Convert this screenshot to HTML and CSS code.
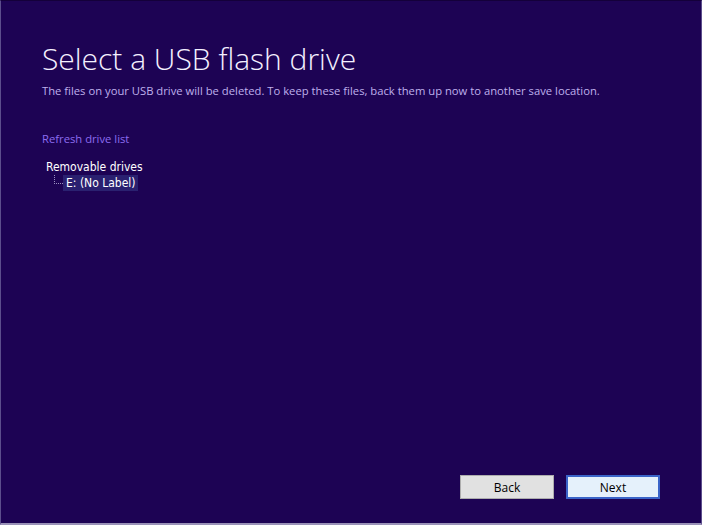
FILE: index.html
```html
<!DOCTYPE html>
<html lang="en">
<head>
    <meta charset="UTF-8">
    <title>Select a USB flash drive</title>
    <link rel="stylesheet" href="styles.css">
</head>
<body>
    <div class="wizard">
        <h1 class="wizard-title">Select a USB flash drive</h1>
        <p class="wizard-subtitle">The files on your USB drive will be deleted. To keep these files, back them up now to another save location.</p>

        <a class="refresh-link" href="#">Refresh drive list</a>

        <div class="drive-tree">
            <div class="tree-root">Removable drives</div>
            <div class="tree-item">
                <span class="tree-line"></span>
                <span class="tree-label">E: (No Label)</span>
            </div>
        </div>

        <div class="wizard-buttons">
            <button class="btn">Back</button>
            <button class="btn btn-default">Next</button>
        </div>
    </div>
</body>
</html>
```

FILE: styles.css
```css
html, body {
    margin: 0;
    padding: 0;
}

body {
    background-color: #1d0354;
}

.wizard {
    box-sizing: border-box;
    width: 702px;
    height: 525px;
    border: 1px solid #5c4e8c;
    border-top-color: #14003a;
    border-bottom-width: 2px;
    border-bottom-color: #9a92b8;
    padding: 38px 41px 24px 41px;
    display: flex;
    flex-direction: column;
    align-items: flex-start;
    font-family: 'Open Sans', sans-serif;
}

.wizard-title {
    margin: 0;
    font-size: 30px;
    font-weight: 300;
    line-height: 40px;
    color: #f4f0ff;
}

.wizard-subtitle {
    margin: 4px 0 0 0;
    font-size: 11.25px;
    line-height: 16px;
    color: #bfb0ec;
}

.refresh-link {
    margin-top: 32px;
    font-size: 11.25px;
    line-height: 16px;
    color: #8c6cf0;
    text-decoration: none;
}

.drive-tree {
    margin-top: 12px;
    margin-left: 4px;
    font-family: 'DejaVu Sans Condensed', 'DejaVu Sans', sans-serif;
    font-size: 12px;
    color: #ffffff;
}

.tree-root {
    line-height: 16px;
}

.tree-item {
    display: flex;
    align-items: center;
}

.tree-line {
    width: 8px;
    height: 8px;
    margin-left: 8px;
    margin-top: -8px;
    border-left: 1px dotted #9a90c0;
    border-bottom: 1px dotted #9a90c0;
}

.tree-label {
    padding: 0 2px 0 3px;
    line-height: 16px;
    background-color: #2a2170;
}

.wizard-buttons {
    margin-top: auto;
    align-self: flex-end;
    display: flex;
    gap: 12px;
}

.btn {
    box-sizing: border-box;
    width: 94px;
    height: 24px;
    background-color: #e1e1e1;
    border: 1px solid #adadad;
    font-family: 'Open Sans', sans-serif;
    font-size: 12px;
    color: #000000;
    padding: 0;
}

.btn-default {
    border: 2px solid #3a64c8;
    background-color: #e5f1fb;
}
```
